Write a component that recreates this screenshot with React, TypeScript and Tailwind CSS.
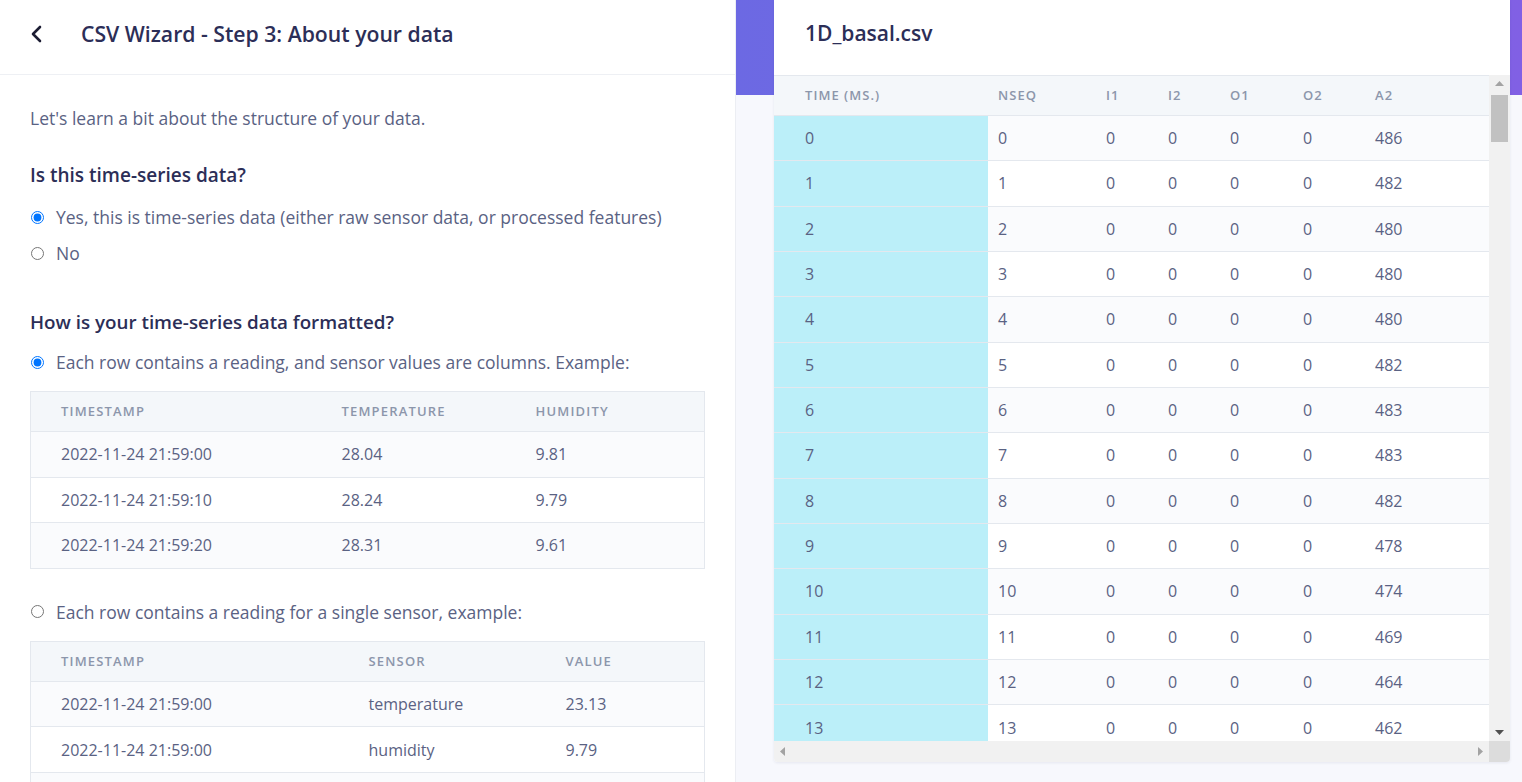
import React from "react";

const a2Vals = [486, 482, 480, 480, 480, 482, 483, 483, 482, 478, 474, 469, 464, 462];
const rightRows = a2Vals.map((a2, i) => ({ t: i, nseq: i, a2 }));

function RadioRow({ checked, label, className = "" }: { checked?: boolean; label: string; className?: string }) {
  return (
    <label className={`flex h-[24px] items-center gap-[12px] text-[17.5px] text-[#5a6283] ${className}`}>
      <input type="radio" defaultChecked={checked} name={label} className="m-0 ml-[1px] h-[13px] w-[13px] shrink-0" />
      <span>{label}</span>
    </label>
  );
}

function ExampleTable({
  headers,
  rows,
  cols,
}: {
  headers: string[];
  rows: string[][];
  cols: string[];
}) {
  return (
    <table className="w-full table-fixed border-collapse border border-[#e4e8ee]">
      <colgroup>
        {cols.map((c, i) => (
          <col key={i} className={c} />
        ))}
      </colgroup>
      <thead>
        <tr className="h-[40px] bg-[#f4f7fa]">
          {headers.map((h) => (
            <th
              key={h}
              className="pl-[30px] text-left text-[13px] font-semibold uppercase tracking-[0.09em] text-[#8c96ab]"
            >
              {h}
            </th>
          ))}
        </tr>
      </thead>
      <tbody>
        {rows.map((r, i) => (
          <tr key={i} className={`h-[45.6px] border-t border-[#e4e8ee] ${i % 2 === 0 ? "bg-[#fafbfd]" : "bg-white"}`}>
            {r.map((c, j) => (
              <td key={j} className="pl-[30px] text-[16px] text-[#5a6283]">
                {c}
              </td>
            ))}
          </tr>
        ))}
      </tbody>
    </table>
  );
}

export default function App() {
  return (
    <div className="flex h-[782px] w-full overflow-hidden bg-white font-['Open_Sans',sans-serif]">
      {/* Left panel */}
      <div className="flex w-[736px] shrink-0 flex-col border-r border-[#eceef3] bg-white">
        <div className="flex h-[75px] shrink-0 items-center border-b border-[#eef0f4] pb-[6px] pl-[30px]">
          <svg width="14" height="18" viewBox="0 0 14 18" className="shrink-0">
            <polyline
              points="10,2 3,9 10,16"
              fill="none"
              stroke="#1c1d33"
              strokeWidth="2.6"
              strokeLinecap="round"
              strokeLinejoin="round"
            />
          </svg>
          <h1 className="ml-[37px] text-[21.2px] font-semibold text-[#2c2e57]">CSV Wizard - Step 3: About your data</h1>
        </div>
        <div className="flex-1 overflow-hidden px-[30px] pt-[31px]">
          <p className="h-[24px] text-[17.5px] leading-[24px] text-[#5a6283]">Let's learn a bit about the structure of your data.</p>
          <h2 className="mt-[32px] h-[26px] text-[19px] font-semibold leading-[26px] text-[#2c2e57]">
            Is this time-series data?
          </h2>
          <RadioRow className="mt-[17px]" checked label="Yes, this is time-series data (either raw sensor data, or processed features)" />
          <RadioRow className="mt-[12px]" label="No" />
          <h2 className="mt-[44px] h-[26px] text-[18.8px] font-semibold leading-[26px] text-[#2c2e57]">
            How is your time-series data formatted?
          </h2>
          <RadioRow className="mt-[15px]" checked label="Each row contains a reading, and sensor values are columns. Example:" />
          <div className="mt-[17px]">
            <ExampleTable
              headers={["Timestamp", "Temperature", "Humidity"]}
              cols={["w-[281px]", "w-[194px]", ""]}
              rows={[
                ["2022-11-24 21:59:00", "28.04", "9.81"],
                ["2022-11-24 21:59:10", "28.24", "9.79"],
                ["2022-11-24 21:59:20", "28.31", "9.61"],
              ]}
            />
          </div>
          <RadioRow className="mt-[31px]" label="Each row contains a reading for a single sensor, example:" />
          <div className="mt-[17px]">
            <ExampleTable
              headers={["Timestamp", "Sensor", "Value"]}
              cols={["w-[308px]", "w-[197px]", ""]}
              rows={[
                ["2022-11-24 21:59:00", "temperature", "23.13"],
                ["2022-11-24 21:59:00", "humidity", "9.79"],
                ["\u00a0", "\u00a0", "\u00a0"],
              ]}
            />
          </div>
        </div>
      </div>

      {/* Right panel */}
      <div className="flex flex-1 flex-col bg-[linear-gradient(to_bottom,transparent_95px,#f7f8fd_95px),linear-gradient(to_right,#6c69e3,#8160e4)] pb-[20px] pl-[38px] pr-[12px]">
        <div className="flex h-full min-h-0 flex-col overflow-hidden rounded-b-[4px] bg-white shadow-[0_1px_3px_rgba(30,40,90,0.08)]">
          <div className="flex h-[75px] shrink-0 items-center pb-[8px] pl-[31px] text-[21px] font-semibold text-[#2c2e57]">
            1D_basal.csv
          </div>
          <div className="grid min-h-0 flex-1 grid-cols-[1fr_21px] grid-rows-[1fr_21px]">
            <div className="min-h-0 overflow-hidden">
              <table className="w-full table-fixed border-collapse">
                <colgroup>
                  <col className="w-[214px]" />
                  <col className="w-[108px]" />
                  <col className="w-[62px]" />
                  <col className="w-[62px]" />
                  <col className="w-[73px]" />
                  <col className="w-[72px]" />
                  <col />
                </colgroup>
                <thead>
                  <tr className="h-[40px] border-t border-[#e4e8ee] bg-[#f4f7fa] text-left text-[13px] uppercase tracking-[0.08em] text-[#8c96ab]">
                    <th className="pl-[31px] font-semibold">Time (ms.)</th>
                    <th className="pl-[10px] font-semibold">nseq</th>
                    <th className="pl-[10px] font-semibold">I1</th>
                    <th className="pl-[10px] font-semibold">I2</th>
                    <th className="pl-[10px] font-semibold">O1</th>
                    <th className="pl-[10px] font-semibold">O2</th>
                    <th className="pl-[10px] font-semibold">A2</th>
                  </tr>
                </thead>
                <tbody className="text-[16px] text-[#5a6283]">
                  {rightRows.map((r, i) => (
                    <tr key={i} className={`h-[45.33px] border-t border-[#e4e8ee] ${i % 2 === 0 ? "bg-[#fafbfd]" : "bg-white"}`}>
                      <td className="bg-[#bbeff9] pl-[31px]">{r.t}</td>
                      <td className="pl-[10px]">{r.nseq}</td>
                      <td className="pl-[10px]">0</td>
                      <td className="pl-[10px]">0</td>
                      <td className="pl-[10px]">0</td>
                      <td className="pl-[10px]">0</td>
                      <td className="pl-[10px]">{r.a2}</td>
                    </tr>
                  ))}
                </tbody>
              </table>
            </div>
            {/* vertical scrollbar */}
            <div className="flex flex-col items-center bg-[#f1f1f1] px-[2px]">
              <div className="flex h-[17px] w-full items-center justify-center">
                <svg width="9" height="5" viewBox="0 0 9 5">
                  <polygon points="0,5 4.5,0 9,5" fill="#a3a3a3" />
                </svg>
              </div>
              <div className="mt-[3px] h-[47px] w-full bg-[#c1c1c1]" />
              <div className="flex-1" />
              <div className="flex h-[17px] w-full items-center justify-center">
                <svg width="9" height="5" viewBox="0 0 9 5">
                  <polygon points="0,0 9,0 4.5,5" fill="#505050" />
                </svg>
              </div>
            </div>
            {/* horizontal scrollbar */}
            <div className="flex items-center justify-between bg-[#f1f1f1] px-[6px]">
              <svg width="5" height="9" viewBox="0 0 5 9">
                <polygon points="5,0 0,4.5 5,9" fill="#a3a3a3" />
              </svg>
              <svg width="5" height="9" viewBox="0 0 5 9">
                <polygon points="0,0 5,4.5 0,9" fill="#a3a3a3" />
              </svg>
            </div>
            <div className="bg-[#dcdcdc]" />
          </div>
        </div>
      </div>
    </div>
  );
}
